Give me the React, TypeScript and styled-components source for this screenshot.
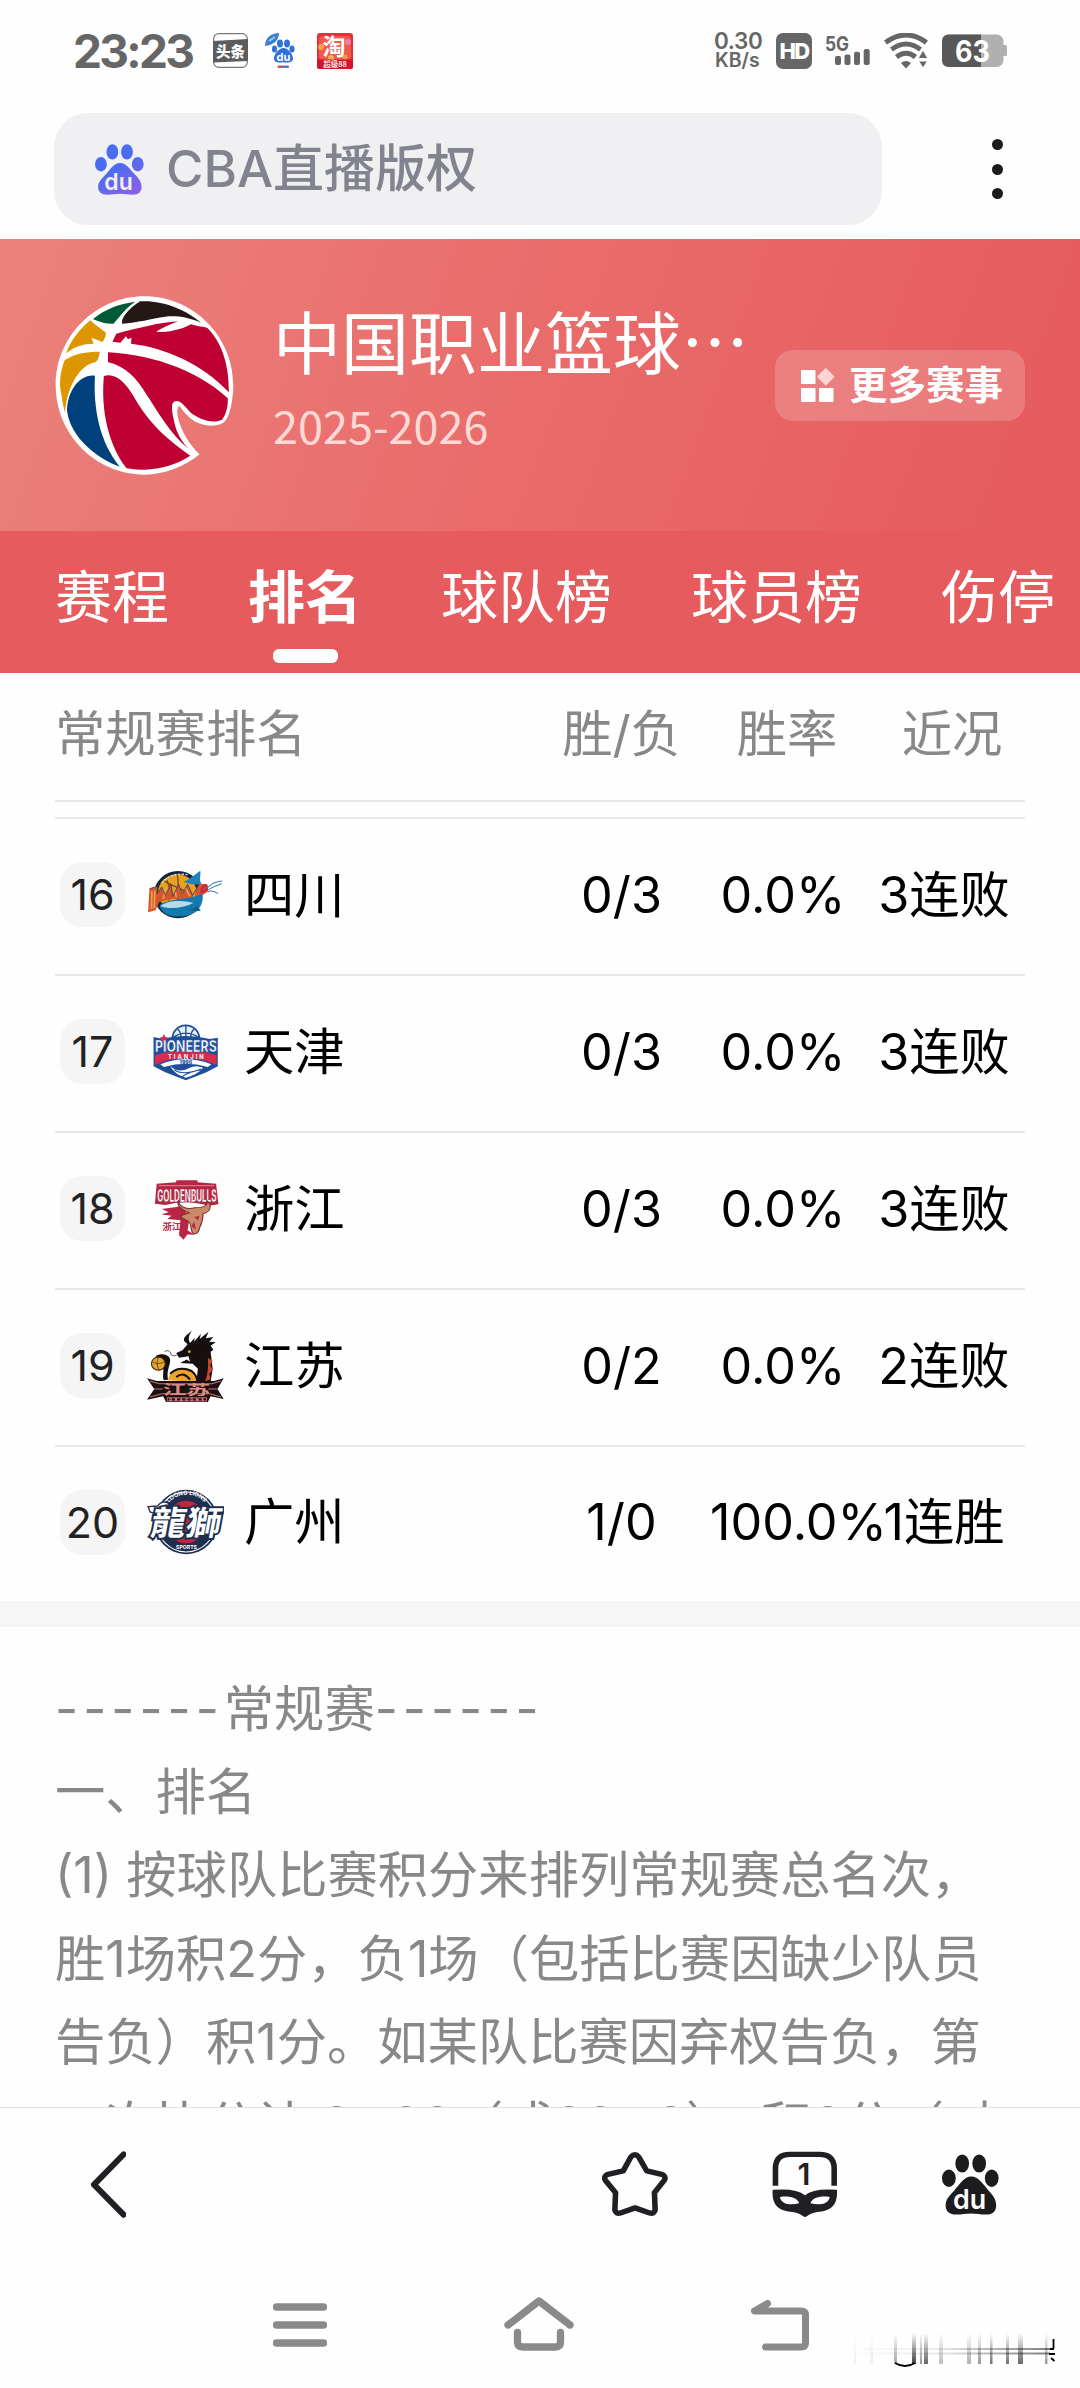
import type { ReactNode } from "react";
import styled, { createGlobalStyle } from "styled-components";

const tabs = ["赛程", "排名", "球队榜", "球员榜", "伤停"];

const rules = ["一、排名", "(1) 按球队比赛积分来排列常规赛总名次，", "胜1场积2分，负1场（包括比赛因缺少队员", "告负）积1分。如某队比赛因弃权告负，第"];

const Paw = ({ width, height, color, textColor = "#fff" }: { width: number; height: number; color: string; textColor?: string }) => (
  <svg width={width} height={height} viewBox="275 430 141 154" preserveAspectRatio="none">
    <defs>
      <linearGradient id="pawFill" gradientUnits="userSpaceOnUse" x1="300" y1="470" x2="370" y2="584">
        <stop offset="0.3" stopColor="#4a6cf0" />
        <stop offset="1" stopColor="#8562e6" />
      </linearGradient>
    </defs>
    <g fill={color}>
      <ellipse cx="325" cy="454" rx="17" ry="23" />
      <ellipse cx="367" cy="454" rx="17" ry="23" />
      <ellipse cx="292" cy="491" rx="17" ry="22" />
      <ellipse cx="398" cy="491" rx="17" ry="22" />
      <path d="M347 487C365 487 375 505 390 522C402 535 409 545 409 560C409 575 400 583 385 583C370 583 360 580 347 580C334 580 324 583 310 583C294 583 284 575 284 560C284 545 292 537 304 524C320 505 330 487 347 487Z" />
    </g>
    <text x="343" y="570" textAnchor="middle" fontFamily="Inter, sans-serif" fontWeight="600" fontSize="70" textLength="82" lengthAdjust="spacingAndGlyphs" fill={textColor}>
      du
    </text>
  </svg>
);

const LeagueLogo = () => (
  <svg width="179" height="179" viewBox="160 165 520 537" preserveAspectRatio="none">
    <path
      fill="#fff"
      d="M580 640C540 675 480 701 420 701C278 701 162 581 162 433C162 286 278 166 420 166C562 166 678 286 678 433C678 475 668 520 658 535C645 558 605 558 578 547C550 535 532 510 522 495C514 497 513 515 520 540C530 575 550 610 580 640Z"
    />
    <path fill="#005a35" d="M270 234C305 205 345 188 394 182C365 200 350 225 330 248C305 250 285 240 270 234Z" />
    <path fill="#231815" d="M407 181C470 176 540 205 584 245C545 227 510 223 480 227C440 233 400 245 355 248C350 235 372 203 407 181Z" />
    <path fill="#dc9600" d="M262 238C280 255 295 265 308 275C308 285 303 296 298 303L266 290L272 308C240 308 215 318 192 337C207 295 235 262 262 238Z" />
    <path fill="#dc9600" d="M188 358C215 338 250 332 290 332C289 345 285 355 279 363C235 370 196 430 189 515C182 490 180 465 176 447C172 415 178 385 188 358Z" />
    <path fill="#00417d" d="M276 404C271 500 288 600 348 677C285 655 205 590 195 510C195 450 232 398 276 404Z" />
    <path fill="#be0032" d="M302 405C345 393 375 440 402 490C440 552 490 600 553 644C515 670 470 684 420 686C400 687 385 685 368 682C315 610 293 510 302 405Z" />
    <path
      fill="#be0032"
      d="M314 334C420 340 560 375 662 472C663 500 655 525 645 536C620 548 590 540 560 520C540 503 530 480 512 480C495 482 498 505 508 550C515 580 530 605 550 625C495 582 455 505 425 460C400 415 365 375 314 364Z"
    />
    <path
      fill="#be0032"
      d="M338 278C400 262 460 245 517 241C490 252 470 262 454 272C495 276 535 262 555 250C570 255 585 257 602 260C640 300 666 360 665 454C590 370 480 320 381 308L382 290L372 295L366 286L350 305L327 302Z"
    />
  </svg>
);

const SichuanLogo = () => (
  <TeamLogo viewBox="424 530 227 228" preserveAspectRatio="none">
    <ellipse cx="517" cy="643" rx="70" ry="71" fill="#10233a" />
    <ellipse cx="515" cy="636" rx="56" ry="54" fill="#e8a020" />
    <path d="M478 603Q510 620 556 640M515 582Q520 610 516 660M485 600Q500 640 490 660" stroke="#7a4a10" strokeWidth="4" fill="none" />
    <path d="M470 608Q495 575 545 583" stroke="#d5dde2" strokeWidth="4" strokeDasharray="7 4" fill="none" />
    <path fill="#1d83b8" d="M533 604C550 598 562 586 582 571C584 586 577 600 586 610C570 616 548 610 533 604Z" />
    <path fill="#d9532c" d="M434 625L458 618L456 640L470 620L480 645L497 612L502 648L519 612L530 640L545 612L560 645L578 612L600 610L606 632L584 648L545 655L500 655L462 665L452 690L430 696Z" />
    <path fill="none" stroke="#e9a24b" strokeWidth="5" d="M441 632L440 686M450 630L448 684M480 625L474 656M507 622L512 650M538 622L552 648M563 650L566 620" />
    <path fill="none" stroke="#33415c" strokeWidth="2.5" d="M434 625L458 618L456 640L470 620L480 645L497 612L502 648L519 612L530 640L545 612L560 645L578 612" />
    <path fill="#1679ad" d="M463 676C485 652 545 660 588 640C594 665 578 697 550 704C515 714 474 710 463 676Z" />
    <path fill="#b8dcec" d="M466 677C490 658 535 660 562 668C530 684 490 688 466 677Z" />
    <path fill="#10608f" d="M540 684Q560 690 570 676L584 690Q565 698 540 684Z" />
    <path fill="none" stroke="#c22c48" strokeWidth="7" d="M583 636Q604 634 600 616Q584 616 586 636" />
    <path fill="none" stroke="#3a87b5" strokeWidth="3" d="M603 622Q622 602 646 602M605 628Q626 616 644 610M604 634Q618 628 634 640" />
  </TeamLogo>
);

const TianjinLogo = () => (
  <TeamLogo viewBox="424 1001 227 228" preserveAspectRatio="none">
    <circle cx="540" cy="1074" r="39" fill="#e9f0fa" stroke="#1f4f9c" strokeWidth="5" />
    <path d="M540 1035V1080M502 1072Q540 1045 578 1072M516 1046Q530 1060 524 1080M564 1046Q550 1060 556 1080" stroke="#1f4f9c" strokeWidth="4" fill="none" />
    <path fill="#1f4f9c" d="M446 1070L470 1075Q540 1058 610 1076L633 1072V1158L600 1176L540 1200L480 1176L446 1158Z" />
    <path fill="#d92b4b" d="M450 1124Q540 1098 630 1124V1154L600 1142Q540 1124 480 1142L450 1154Z" />
    <path fill="#fff" d="M466 1152Q540 1122 614 1152L604 1160Q540 1140 476 1160Z" />
    <path fill="#fff" d="M494 1158Q520 1180 548 1164Q570 1152 590 1162Q575 1182 540 1192Q510 1185 494 1158Z" />
    <path fill="none" stroke="#1f4f9c" strokeWidth="3" d="M506 1168Q530 1188 584 1166M528 1190Q555 1170 588 1168" />
    <path fill="#d92b4b" d="M476 1060L480 1070L489 1072L482 1079L484 1088L476 1083L468 1088L470 1079L463 1072L472 1070Z" />
    <text x="540" y="1115" textAnchor="middle" fontFamily="Inter, sans-serif" fontWeight="800" fontSize="46" textLength="180" lengthAdjust="spacingAndGlyphs" fill="#fff" stroke="#1f4f9c" strokeWidth="2">
      PIONEERS
    </text>
    <text x="540" y="1136" textAnchor="middle" fontFamily="Inter, sans-serif" fontWeight="700" fontSize="17" textLength="104" fill="#fff">
      TIANJIN
    </text>
    <text x="540" y="1151" textAnchor="middle" fontFamily="Inter, sans-serif" fontWeight="800" fontSize="15" fill="#1f4f9c">
      1996
    </text>
  </TeamLogo>
);

const ZhejiangLogo = () => (
  <TeamLogo viewBox="424 152 227 228" preserveAspectRatio="none">
    <path fill="#b92545" d="M455 190L512 186V180H574V186L628 190L635 252L606 256Q540 236 480 254L450 250Z" />
    <path fill="none" stroke="#efb9c3" strokeWidth="2" d="M462 196H622" />
    <text x="543" y="246" textAnchor="middle" fontFamily="Inter, sans-serif" fontWeight="800" fontSize="50" textLength="172" lengthAdjust="spacingAndGlyphs" fill="#fff" stroke="#8f1b35" strokeWidth="1.5">
      GOLDENBULLS
    </text>
    <path fill="#b92545" d="M470 266L512 260L528 256L540 276L552 282L545 330L566 344L545 342L533 358L520 344L524 300L486 296L498 286L468 282L490 276Z" />
    <path fill="#c98a68" stroke="#7d2a2f" strokeWidth="3" d="M518 240C520 262 545 268 566 262C590 262 604 258 602 242C618 255 612 275 590 280C590 300 586 310 580 322C578 336 572 342 562 340C552 332 558 318 550 306C545 298 530 298 524 288C532 280 545 280 550 278C528 268 512 258 518 240Z" />
    <path fill="#b92545" d="M564 290L580 286L575 300ZM556 318L564 304L570 328Z" />
    <text x="499" y="330" textAnchor="middle" fontFamily="'Noto Sans CJK SC', sans-serif" fontWeight="700" fontSize="27" fill="#b92545">
      浙江
    </text>
  </TeamLogo>
);

const JiangsuLogo = () => (
  <TeamLogo viewBox="424 623 227 228" preserveAspectRatio="none">
    <path fill="#15100f" d="M512 698L530 690L545 672L535 662C530 650 550 640 558 630C550 645 545 652 552 668L566 652L564 664L584 640L580 656L606 634L598 654L620 650L608 664L627 666L612 676L620 688L612 694L618 745L612 785L570 790L575 745L560 730L524 728L548 714L520 712Z" />
    <path fill="#c9472f" d="M604 712L618 722L610 735L619 748L608 760L612 776L596 784Q608 750 604 712Z" />
    <path fill="#fff" d="M520 712L548 708L552 724L540 716L536 722L530 714L526 720Z" />
    <circle cx="550" cy="694" r="4" fill="#e9a62b" />
    <path fill="#15100f" d="M452 708C470 695 498 704 494 724C492 740 484 750 488 778L476 780C468 760 488 740 452 708Z" />
    <circle cx="460" cy="730" r="20" fill="#e2a52e" stroke="#3a2410" strokeWidth="3" />
    <path fill="none" stroke="#3a2410" strokeWidth="2" d="M443 725Q460 735 478 724M460 711Q452 730 462 750" />
    <path fill="#e9a62b" d="M488 780C492 750 520 738 545 744C568 750 574 765 572 786Z" />
    <path fill="none" stroke="#15100f" strokeWidth="6" d="M494 760Q520 735 556 752Q570 762 574 782M512 770Q535 752 552 778" />
    <path fill="none" stroke="#15100f" strokeWidth="2" d="M478 694Q492 684 498 704Q506 710 514 704" />
    <path fill="#1b1112" d="M427 774L456 782H622L650 774L632 806L650 836L612 828L604 845H482L474 828L427 838L448 806Z" />
    <path fill="none" stroke="#c9756e" strokeWidth="3" d="M436 782L462 790H616L642 782M436 830L470 820H610L642 830M446 806H472M606 806H632" />
    <path fill="none" stroke="#c5626a" strokeWidth="3" d="M486 832H600V842H486Z" />
    <text x="542" y="821" textAnchor="middle" fontFamily="'Noto Sans CJK SC', sans-serif" fontWeight="700" fontSize="38" textLength="138" lengthAdjust="spacingAndGlyphs" fill="#e08a85">
      江苏
    </text>
    <text x="542" y="843" textAnchor="middle" fontFamily="Inter, sans-serif" fontWeight="700" fontSize="11" textLength="100" fill="#e8b4ae">
      DRAGONS
    </text>
  </TeamLogo>
);

const GuangzhouLogo = () => (
  <TeamLogo viewBox="424 1094 227 228" preserveAspectRatio="none">
    <defs>
      <path id="lionsArc" d="M476 1176A70 70 0 0 1 610 1176" />
    </defs>
    <ellipse cx="541" cy="1208" rx="93" ry="97" fill="#1d2f4d" />
    <ellipse cx="541" cy="1208" rx="86" ry="90" fill="none" stroke="#fff" strokeWidth="3" />
    <ellipse cx="541" cy="1208" rx="56" ry="64" fill="#c8233f" />
    <path fill="#fff" stroke="#1d2f4d" strokeWidth="4" d="M430 1162L458 1160Q470 1142 490 1152L486 1164L448 1182L436 1178Z" />
    <text fontFamily="Inter, sans-serif" fontWeight="700" fontSize="17" fill="#fff">
      <textPath href="#lionsArc" startOffset="30">
        LOONG LIONS
      </textPath>
    </text>
    <g transform="skewX(-10)">
      <text x="755" y="1246" textAnchor="middle" fontFamily="'Noto Sans CJK TC', sans-serif" fontWeight="700" fontSize="100" textLength="204" lengthAdjust="spacingAndGlyphs" fill="#fff" stroke="#1d2f4d" strokeWidth="12" paintOrder="stroke">
        龍獅
      </text>
    </g>
    <text x="542" y="1288" textAnchor="middle" fontFamily="Inter, sans-serif" fontWeight="700" fontSize="15" fill="#fff">
      SPORTS
    </text>
  </TeamLogo>
);

interface Team {
  rank: number;
  name: string;
  record: string;
  rate: string;
  recent: string;
  logo: ReactNode;
}

const TeamLogo = styled.svg`
  width: 78px;
  height: 76px;
  margin-left: 21px;
`;

const teams: Team[] = [
  { rank: 16, name: "四川", record: "0/3", rate: "0.0%", recent: "3连败", logo: <SichuanLogo /> },
  { rank: 17, name: "天津", record: "0/3", rate: "0.0%", recent: "3连败", logo: <TianjinLogo /> },
  { rank: 18, name: "浙江", record: "0/3", rate: "0.0%", recent: "3连败", logo: <ZhejiangLogo /> },
  { rank: 19, name: "江苏", record: "0/2", rate: "0.0%", recent: "2连败", logo: <JiangsuLogo /> },
  { rank: 20, name: "广州", record: "1/0", rate: "100.0%", recent: "1连胜", logo: <GuangzhouLogo /> },
];

const ToutiaoIcon = () => (
  <svg width="35" height="35" viewBox="0 0 35 35">
    <rect x="0.7" y="0.7" width="33.6" height="33.6" rx="5" fill="#fff" stroke="#777" strokeWidth="1.2" />
    <path d="M0 8L35 6V28L0 29.5Z" fill="#5c5c5c" />
    <text x="17.5" y="23.5" textAnchor="middle" fontFamily="'Noto Sans CJK SC', sans-serif" fontWeight="900" fontSize="14.5" fill="#fff">
      头条
    </text>
  </svg>
);

const BaiduMapIcon = () => (
  <svg width="35" height="36" viewBox="0 0 35 36">
    <path d="M0 13C0 5 6 0 14 0C14 8 8 12 0 13Z" fill="#3f7fd0" />
    <path d="M4 8L10 4" stroke="#9cc2f0" strokeWidth="2" />
    <g fill="#2f71d4">
      <ellipse cx="15" cy="10.5" rx="3" ry="4" />
      <ellipse cx="22" cy="10.5" rx="3" ry="4" />
      <ellipse cx="9.5" cy="16" rx="2.6" ry="3.6" />
      <ellipse cx="27" cy="16" rx="2.6" ry="3.6" />
      <path d="M18.500 15C23 15 28 21 28 25.500C28 29 25 30 18.500 29.300C12 30 9 29 9 25.500C9 21 14 15 18.500 15Z" />
    </g>
    <text x="18.5" y="28" textAnchor="middle" fontFamily="Inter, sans-serif" fontWeight="700" fontSize="11" fill="#fff">
      du
    </text>
    <rect x="12.500" y="32.500" width="6" height="2.500" rx="1" fill="#c9505c" />
    <rect x="18" y="32.500" width="6" height="2.500" rx="1" fill="#4a78c8" />
  </svg>
);

const TaobaoIcon = () => (
  <svg width="36" height="36" viewBox="0 0 36 36">
    <rect width="36" height="36" rx="3" fill="#e2303a" />
    <rect x="2" y="3" width="32" height="24" rx="4" fill="#ee5a4c" />
    <circle cx="4" cy="14" r="3" fill="#f6a53f" />
    <circle cx="31" cy="9" r="3" fill="#f07ab0" />
    <circle cx="14" cy="25" r="3" fill="#f8b34a" />
    <circle cx="28" cy="24" r="2.500" fill="#f39a3e" />
    <text x="17" y="22" textAnchor="middle" fontFamily="'Noto Sans CJK SC', sans-serif" fontWeight="700" fontSize="23" fill="#fff">
      淘
    </text>
    <rect y="26.500" width="36" height="9.500" rx="2" fill="#d3122b" />
    <text x="18" y="34" textAnchor="middle" fontFamily="'Noto Sans CJK SC', sans-serif" fontWeight="500" fontSize="7.500" fill="#fff">
      超级88
    </text>
  </svg>
);

const SignalIcon = () => (
  <svg width="46" height="36" viewBox="0 0 46 36">
    <text x="0" y="17.500" fontFamily="Inter, sans-serif" fontWeight="700" fontSize="20" textLength="24" lengthAdjust="spacingAndGlyphs" fill="#666">
      5G
    </text>
    <g fill="#666">
      <rect x="10" y="23" width="6" height="9" rx="2" />
      <rect x="19.500" y="21.500" width="6" height="10.500" rx="2" />
      <rect x="29" y="18.700" width="6" height="13.300" rx="2" />
      <rect x="38.700" y="16" width="6" height="16" rx="2" />
    </g>
  </svg>
);

const WifiIcon = () => (
  <svg width="45" height="36" viewBox="0 0 45 36">
    <g fill="none" stroke="#666" strokeWidth="5">
      <path d="M1.500 9.500Q22 -5.500 42.500 9.500" />
      <path d="M7.500 16.500Q22 5.500 36.500 16.500" />
      <path d="M12.500 24Q22 16.500 31.500 24" />
    </g>
    <path d="M17 30Q22 26 27 30L22 35.500Z" fill="#666" />
    <path d="M39 17L44 25.500H34ZM39 35L43.500 28H34.500Z" fill="#666" stroke="#fff" strokeWidth="1" />
  </svg>
);

const BatteryIcon = () => (
  <svg width="66" height="34" viewBox="0 0 66 34">
    <rect x="60" y="11" width="5" height="11" rx="1.500" fill="#b0b0b0" />
    <rect x="0" y="0.500" width="61.500" height="32.500" rx="7" fill="#b0b0b0" />
    <path d="M7 0.500H39V33H7Q0 33 0 26V7.500Q0 0.500 7 0.500Z" fill="#585858" />
    <text x="30.500" y="28" textAnchor="middle" fontFamily="Inter, sans-serif" fontWeight="700" fontSize="30" textLength="35" lengthAdjust="spacingAndGlyphs" fill="#fff">
      63
    </text>
  </svg>
);

const GridIcon = () => (
  <svg width="34" height="34" viewBox="0 0 34 34">
    <g fill="#fff">
      <rect x="0" y="2" width="14.500" height="14" rx="1" />
      <rect x="0" y="20" width="14.500" height="14" rx="1" />
      <rect x="18" y="20" width="14.500" height="14" rx="1" />
    </g>
    <rect x="18.500" y="2.500" width="12.500" height="12.500" rx="1" fill="#fdd5d5" transform="rotate(45 24.75 8.75)" />
  </svg>
);

const BackIcon = () => (
  <svg width="36" height="68" viewBox="90 2150 36 68" fill="none" stroke="#1f1f24" strokeWidth="6" strokeLinecap="round" strokeLinejoin="round">
    <path d="M123.500 2154.500L94 2184.700L123.500 2214.700" />
  </svg>
);

const StarIcon = () => (
  <svg width="66" height="64" viewBox="182 153 190 189" preserveAspectRatio="none" fill="none" stroke="#1f1f24" strokeWidth="16" strokeLinejoin="round">
    <path d="M265 168Q277 154 288 168L311 209L354 219Q368 225 361 237L333 273L335 324Q332 337 319 333L277 318L235 333Q222 337 219 324L221 273L192 237Q185 225 199 219L243 209Z" />
  </svg>
);

const TabsIcon = () => (
  <svg width="66" height="66" viewBox="670 158 190 197" preserveAspectRatio="none">
    <path d="M680 262V210Q680 168 722 168H806Q849 168 849 210V262" fill="none" stroke="#1f1f24" strokeWidth="16" />
    <path
      fill="#1f1f24"
      fillRule="evenodd"
      d="M672 274Q740 268 765 290Q790 268 857 274C860 320 840 338 800 340Q780 344 770 353Q765 357 760 353Q750 344 730 340C690 338 668 320 672 274ZM693 295C695 315 722 322 748 314C745 298 720 290 693 295ZM836 295C834 315 808 322 781 314C784 298 809 290 836 295Z"
    />
    <text x="762" y="260" textAnchor="middle" fontFamily="Inter, sans-serif" fontWeight="600" fontSize="88" fill="#1f1f24">
      1
    </text>
  </svg>
);

const MenuIcon = () => (
  <svg width="54" height="50" viewBox="273 2300 54 50" stroke="#8a8a8a" strokeWidth="7.500" strokeLinecap="round">
    <path d="M276.500 2307H323.500M276.500 2325H323.500M276.500 2343H323.500" />
  </svg>
);

const HomeIcon = () => (
  <svg width="70" height="58" viewBox="505 2292 70 58" fill="none" stroke="#8a8a8a" strokeWidth="7.300" strokeLinecap="round" strokeLinejoin="round">
    <path d="M509 2321L540 2297L571 2321" />
    <path d="M518.500 2328.500V2338Q518.500 2343 523.500 2343H556.500Q561.500 2343 561.500 2338V2328.500" />
  </svg>
);

const ReturnIcon = () => (
  <svg width="58" height="52" viewBox="751 2295 58 52" fill="none" stroke="#8a8a8a" strokeWidth="7" strokeLinecap="round" strokeLinejoin="round">
    <path d="M767.500 2299.500L754.500 2307H801Q805.500 2307 805.500 2311V2339Q805.500 2343 801 2343H765.500" />
  </svg>
);

const smears = [
  { x: 28, w: 2, o: 0.06 },
  { x: 44, w: 3, o: 0.06 },
  { x: 68, w: 3, o: 0.35 },
  { x: 86, w: 4, o: 0.75 },
  { x: 94, w: 2, o: 0.4 },
  { x: 98, w: 4, o: 0.6 },
  { x: 113, w: 4, o: 0.25 },
  { x: 141, w: 4, o: 0.3 },
  { x: 152, w: 3, o: 0.4 },
  { x: 164, w: 2.5, o: 0.55 },
  { x: 180, w: 3, o: 0.55 },
  { x: 192, w: 5, o: 0.6 },
  { x: 219, w: 2.5, o: 0.4 },
];

const CornerMark = () => (
  <Corner viewBox="0 0 232 40">
    <defs>
      <linearGradient id="smear" x1="0" y1="0" x2="0" y2="1">
        <stop offset="0" stopColor="#000" stopOpacity="0" />
        <stop offset="1" stopColor="#000" />
      </linearGradient>
      <linearGradient id="streak" x1="0" y1="0" x2="1" y2="0">
        <stop offset="0.1" stopColor="#000" stopOpacity="0" />
        <stop offset="0.5" stopColor="#000" stopOpacity="0.08" />
        <stop offset="1" stopColor="#000" stopOpacity="0.5" />
      </linearGradient>
    </defs>
    {smears.map(({ x, w, o }) => (
      <rect key={x} x={x} y="2" width={w} height="31" fill="url(#smear)" opacity={o} />
    ))}
    <rect x="0" y="17" width="224" height="2" fill="url(#streak)" />
    <rect x="0" y="21.500" width="224" height="2" fill="url(#streak)" />
    <path d="M69 32Q79 38 89 32" fill="none" stroke="#000" strokeWidth="2" />
    <path d="M227.500 8V18M224 18H228M223 23H229M225 27L228.500 30" fill="none" stroke="#000" strokeWidth="1.800" />
  </Corner>
);

export default function App() {
  return (
    <Page>
      <GlobalStyle />
      <StatusBar>
        <Clock>23:23</Clock>
        <AppIcons>
          <ToutiaoIcon />
          <BaiduMapIcon />
          <TaobaoIcon />
        </AppIcons>
        <NetSpeed>
          <Speed>0.30</Speed>
          <SpeedUnit>KB/s</SpeedUnit>
        </NetSpeed>
        <HdBadge>HD</HdBadge>
        <StatusIcons>
          <SignalIcon />
          <WifiIcon />
          <BatteryIcon />
        </StatusIcons>
      </StatusBar>

      <SearchRow>
        <SearchBox>
          <Paw width={49} height={51} color="url(#pawFill)" textColor="#f0f0f2" />
          <span>CBA直播版权</span>
        </SearchBox>
        <MoreDots>
          <i />
          <i />
          <i />
        </MoreDots>
      </SearchRow>

      <Hero>
        <LeagueLogo />
        <HeroText>
          <Title>中国职业篮球…</Title>
          <Season>2025-2026</Season>
        </HeroText>
        <MoreButton>
          <GridIcon />
          更多赛事
        </MoreButton>
      </Hero>

      <Tabs>
        {tabs.map((tab) => (
          <Tab key={tab} $active={tab === "排名"}>
            {tab}
          </Tab>
        ))}
      </Tabs>

      <Table>
        <HeadRow>
          <HeadName>常规赛排名</HeadName>
          <HeadCell $width={147}>胜/负</HeadCell>
          <HeadCell $width={184}>胜率</HeadCell>
          <HeadCell $width={146}>近况</HeadCell>
        </HeadRow>
        <HiddenRow />
        {teams.map(({ rank, name, record, rate, recent, logo }) => (
          <Row key={rank}>
            <Rank>{rank}</Rank>
            {logo}
            <TeamName>{name}</TeamName>
            <Cell $width={177}>{record}</Cell>
            <Cell $width={146}>{rate}</Cell>
            <Cell $width={176}>{recent}</Cell>
          </Row>
        ))}
      </Table>
      <Band />

      <Rules>
        <p>
          <Dashes>------</Dashes>常规赛<Dashes>------</Dashes>
        </p>
        {rules.map((line) => (
          <p key={line}>{line}</p>
        ))}
        <p>
          一次比分计 0<Colon>：</Colon>20（或20<Colon>：</Colon>0），积0分（对
        </p>
      </Rules>

      <Toolbar>
        <BackIcon />
        <ToolbarGroup>
          <StarIcon />
          <TabsIcon />
          <Paw width={57} height={61} color="#1c1c1e" />
        </ToolbarGroup>
      </Toolbar>

      <SystemNav>
        <MenuIcon />
        <HomeIcon />
        <ReturnIcon />
        <CornerMark />
      </SystemNav>
    </Page>
  );
}

const GlobalStyle = createGlobalStyle`
  * {
    box-sizing: border-box;
  }

  body {
    margin: 0;
    background: #fefefe;
  }

  p {
    margin: 0;
  }

  svg {
    display: block;
    flex: none;
  }
`;

const Page = styled.div`
  width: 1080px;
  height: 2388px;
  display: flex;
  flex-direction: column;
  overflow: hidden;
  background: #fefefe;
  font-family: Inter, "Noto Sans CJK SC", sans-serif;
  font-size: 50.3px;
  line-height: 60px;
  white-space: nowrap;
`;

const StatusBar = styled.header`
  height: 100px;
  flex: none;
  display: flex;
  align-items: center;
  padding: 1px 72px 0 73px;
  color: #666;
`;

const Clock = styled.div`
  width: 140px;
  font-size: 46px;
  font-weight: 700;
  letter-spacing: -2.7px;
  line-height: 50px;
`;

const AppIcons = styled.div`
  display: flex;
  align-items: center;
  gap: 17px;
`;

const NetSpeed = styled.div`
  width: 50px;
  margin-left: auto;
  display: flex;
  flex-direction: column;
  font-weight: 600;
`;

const Speed = styled.span`
  font-size: 22.5px;
  line-height: 18px;
  letter-spacing: -0.4px;
`;

const SpeedUnit = styled.span`
  padding-left: 1px;
  font-size: 19.5px;
  line-height: 20px;
`;

const HdBadge = styled.div`
  width: 36px;
  height: 36px;
  margin-left: 12px;
  border-radius: 7px;
  background: #666;
  color: #fff;
  font-size: 22px;
  font-weight: 800;
  letter-spacing: -1.7px;
  line-height: 36px;
  text-align: center;
`;

const StatusIcons = styled.div`
  display: flex;
  align-items: center;
  gap: 13px;
  margin-left: 13px;
`;

const SearchRow = styled.div`
  height: 139px;
  flex: none;
  display: flex;
  align-items: flex-start;
  justify-content: space-between;
  padding: 13px 77px 0 54px;
`;

const SearchBox = styled.div`
  width: 828px;
  height: 112px;
  display: flex;
  align-items: center;
  gap: 22px;
  padding-left: 41px;
  border-radius: 34px;
  background: #f0f0f2;
  color: #81838f;
  font-size: 51px;
  font-weight: 500;
`;

const MoreDots = styled.div`
  height: 112px;
  display: flex;
  flex-direction: column;
  justify-content: center;
  gap: 13.5px;

  > i {
    width: 11px;
    height: 11px;
    border-radius: 50%;
    background: #1c1c1e;
  }
`;

const Hero = styled.section`
  height: 292px;
  flex: none;
  display: flex;
  align-items: center;
  padding: 0 55px;
  background: linear-gradient(110deg, #eb817b 0%, #e96c6b 48%, #e65b5d 97%);
  color: #fff;
`;

const HeroText = styled.div`
  width: 500px;
  margin-left: 39px;
  padding-bottom: 19px;
  font-family: "Noto Sans CJK SC", sans-serif;
`;

const Title = styled.div`
  font-size: 68px;
  line-height: 90px;
`;

const Season = styled.div`
  margin-top: 8px;
  color: #ffd9d6;
  font-size: 45px;
  line-height: 64px;
`;

const MoreButton = styled.div`
  width: 250px;
  height: 71px;
  margin-left: auto;
  padding-left: 26px;
  display: flex;
  align-items: center;
  gap: 14px;
  border-radius: 18px;
  background: rgba(255, 255, 255, 0.18);
  font-size: 38.5px;
  font-weight: 700;
`;

const Tabs = styled.nav`
  height: 142px;
  flex: none;
  display: flex;
  gap: 79px;
  padding-left: 55px;
  background: #e65b5d;
  color: #fff;
  font-size: 57px;
`;

const Tab = styled.div<{ $active: boolean }>`
  display: flex;
  flex-direction: column;
  align-items: center;
  line-height: 118px;
  padding-top: 8px;
  font-weight: ${({ $active }) => ($active ? 700 : 400)};

  &::after {
    content: "";
    width: 65px;
    height: 14px;
    margin-top: -8px;
    border-radius: 6px;
    background: ${({ $active }) => ($active ? "#fff" : "transparent")};
  }
`;

const Table = styled.div`
  flex: none;
  padding: 0 55px;
`;

const HeadRow = styled.div`
  height: 129px;
  display: flex;
  align-items: center;
  padding-bottom: 6px;
  border-bottom: 2px solid #e8e8e8;
  color: #888;
`;

const HeadName = styled.div`
  flex: 1;
`;

const HeadCell = styled.div<{ $width: number }>`
  width: ${({ $width }) => $width}px;
  text-align: center;
`;

// bottom edge of the row scrolled under the header
const HiddenRow = styled.div`
  height: 17px;
  border-bottom: 2px solid #e8e8e8;
`;

const Row = styled.div`
  height: 157px;
  display: flex;
  align-items: center;
  padding-bottom: 4px;
  border-bottom: 2px solid #e8e8e8;
  color: #000;

  &:last-child {
    height: 154px;
    border-bottom: none;
  }
`;

const Rank = styled.div`
  width: 65px;
  height: 65px;
  margin-left: 5px;
  border-radius: 22px;
  background: #f5f5f5;
  color: #222;
  font-size: 43px;
  line-height: 65px;
  text-align: center;
`;

const TeamName = styled.div`
  flex: 1;
  margin-left: 20px;
`;

const Cell = styled.div<{ $width: number }>`
  width: ${({ $width }) => $width}px;
  text-align: center;

  &:last-child {
    margin-right: -7px;
  }
`;

const Band = styled.div`
  height: 26px;
  flex: none;
  background: #f6f6f6;
`;

const Rules = styled.article`
  height: 481px;
  flex: none;
  overflow: hidden;
  padding: 40px 55px 0;
  border-bottom: 1px solid #e2e2e2;
  color: #888;
  line-height: 83.2px;
`;

const Dashes = styled.span`
  letter-spacing: 5px;
`;

const Colon = styled.span`
  letter-spacing: -12px;
`;

const Toolbar = styled.footer`
  height: 152px;
  flex: none;
  display: flex;
  align-items: center;
  justify-content: space-between;
  padding: 0 81px 0 90px;
`;

const ToolbarGroup = styled.div`
  display: flex;
  align-items: center;
  gap: 104px;
`;

const SystemNav = styled.nav`
  position: relative;
  height: 128px;
  flex: none;
  display: flex;
  align-items: center;
  justify-content: space-between;
  padding: 2px 271px 0 273px;
`;

const Corner = styled.svg`
  position: absolute;
  right: 22px;
  bottom: 17px;
  width: 232px;
  height: 40px;
`;
